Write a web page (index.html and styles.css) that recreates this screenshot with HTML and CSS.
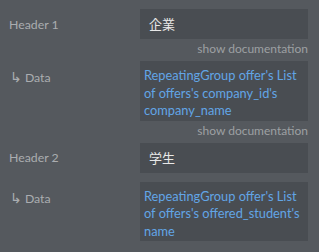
FILE: index.html
```html
<!DOCTYPE html>
<html>
<head>
<meta charset="utf-8">
<link rel="stylesheet" href="styles.css">
</head>
<body>
<div class="panel">
  <div class="row">
    <div class="label">Header 1</div>
    <div class="field"><div class="box text">企業</div></div>
  </div>
  <div class="doc">show documentation</div>
  <div class="row data">
    <div class="label"><span class="arrow">↳</span> Data</div>
    <div class="field"><div class="box expr">RepeatingGroup offer's List of offers's company_id's company_name</div></div>
  </div>
  <div class="doc">show documentation</div>
  <div class="row">
    <div class="label">Header 2</div>
    <div class="field"><div class="box text">学生</div></div>
  </div>
  <div class="row data">
    <div class="label"><span class="arrow">↳</span> Data</div>
    <div class="field"><div class="box expr">RepeatingGroup offer's List of offers's offered_student's name</div></div>
  </div>
</div>
</body>
</html>
```
FILE: styles.css
```css
html, body {
  margin: 0;
  padding: 0;
  background: #55595e;
}
body {
  font-family: Lato, "Noto Sans CJK JP", sans-serif;
  font-size: 12px;
  width: 319px;
  height: 252px;
  overflow: hidden;
}
.panel {
  padding: 9px 11px 0 9px;
  display: flex;
  flex-direction: column;
}
.row {
  display: grid;
  grid-template-columns: 131px 168px;
  align-items: center;
}
.row.data {
  align-items: start;
  margin-top: 9px;
}
.label {
  color: #aaadb0;
  font-size: 12.3px;
}
.row.data .label {
  padding-left: 1px;
  line-height: 18px;
  padding-top: 7px;
}
.arrow {
  font-family: "DejaVu Sans", sans-serif;
  font-size: 14px;
}
.box {
  background: #494d52;
  box-sizing: border-box;
}
.text {
  height: 30px;
  line-height: 30px;
  padding-left: 9px;
  color: #e8e8e8;
  font-family: "Noto Sans CJK JP", sans-serif;
  font-size: 13px;
}
.expr {
  color: #62a5e6;
  font-size: 12.8px;
  line-height: 17.5px;
  padding: 6px 2px 1px 4px;
}
.doc {
  color: #9da0a3;
  font-size: 12px;
  text-align: right;
  line-height: 15px;
  margin-top: 2px;
}
.doc + .row {
  margin-top: 5px;
}
```
